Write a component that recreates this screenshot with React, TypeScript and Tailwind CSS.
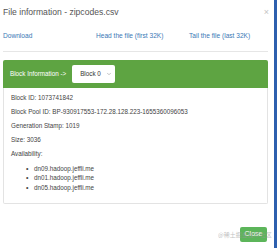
import { ChevronDown } from 'lucide-react';

const hosts = ['dn09.hadoop.jeffli.me', 'dn01.hadoop.jeffli.me', 'dn05.hadoop.jeffli.me'];

export default function App() {
  return (
    <div className="relative flex w-[277px] h-[248px] bg-white overflow-hidden font-['Liberation_Sans',Arial,sans-serif] text-[#444]">
      <div className="flex-1 flex flex-col pl-[3px] pr-[6px]">
        {/* Header */}
        <div className="h-[24px] flex items-center justify-between">
          <h4 className="text-[8.6px] text-[#555]">File information - zipcodes.csv</h4>
          <span className="text-[9px] leading-none text-[#c4c4c4] mr-[-1px]">×</span>
        </div>

        {/* Links */}
        <div className="h-[24px] grid grid-cols-[93px_93px_1fr] items-center text-[6.6px] text-[#3a78b5]">
          <span>Download</span>
          <span>Head the file (first 32K)</span>
          <span>Tail the file (last 32K)</span>
        </div>
        <div className="mt-[3px] border-t border-[#e6e6e6]" />

        {/* Block panel */}
        <div className="mt-[8px] flex flex-col">
          <div className="h-[28px] bg-[#5ea442] rounded-t-[2px] flex items-center pl-[7px] text-[6.3px] text-white">
            <span>Block Information -&gt;</span>
            <div className="ml-[6px] w-[43px] h-[18px] bg-white rounded-[2px] flex items-center justify-between pl-[8px] pr-[3px] text-[#333]">
              <span>Block 0</span>
              <ChevronDown className="w-[6px] h-[6px] text-[#888]" strokeWidth={2} />
            </div>
          </div>
          <div className="h-[116px] border border-t-0 border-[#e3e3e3] rounded-b-[2px] pt-[3px] pl-[7px] text-[6.3px] leading-[14px]">
            <p>Block ID: 1073741842</p>
            <p>Block Pool ID: BP-930917553-172.28.128.223-1655360096053</p>
            <p>Generation Stamp: 1019</p>
            <p>Size: 3036</p>
            <p>Availability:</p>
            <ul className="mt-[3px] pl-[15px] leading-[9.4px]">
              {hosts.map((h) => (
                <li key={h} className="flex items-center">
                  <span className="w-[4px] mr-[4px] text-[7px]">•</span>
                  {h}
                </li>
              ))}
            </ul>
          </div>
        </div>

        {/* Footer */}
        <div className="mt-[23px] flex justify-end pr-[1px]">
          <button className="w-[27px] h-[15px] rounded-[2px] bg-[#5cb55a] text-white text-[7px]">Close</button>
        </div>
      </div>
      <div className="w-[3px] bg-[#2d5fae]" />

      {/* watermark */}
      <span className="absolute left-[218px] top-[232px] text-[6px] leading-none text-[#999] opacity-60 font-['Noto_Sans_CJK_SC',sans-serif]">
        @稀土掘金技术社区
      </span>
    </div>
  );
}
